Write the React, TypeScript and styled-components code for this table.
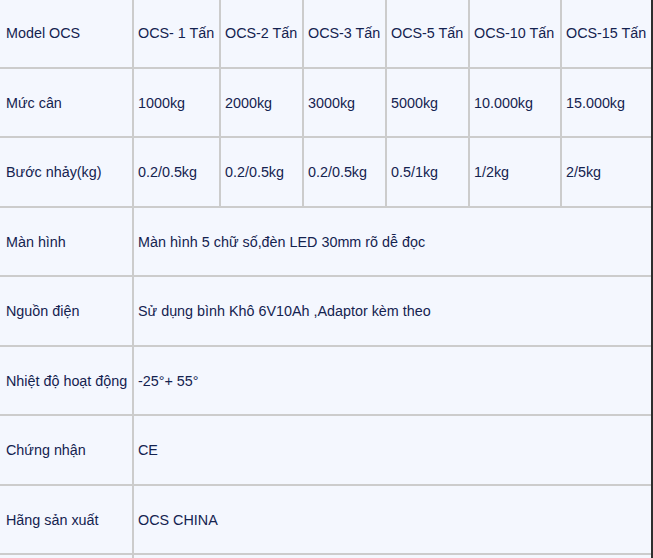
import React from "react";
import styled, { createGlobalStyle } from "styled-components";

const Global = createGlobalStyle`
  html, body { margin: 0; padding: 0; background: #f4f7fe; overflow: hidden; }
  body { width: 653px; height: 558px; }
`;

const Frame = styled.div`
  width: 651px;
  height: 558px;
  overflow: hidden;
  border-right: 2px solid #2e2e2e;
  background: #f4f7fe;
`;

const Table = styled.table`
  border-collapse: separate;
  border-spacing: 0;
  table-layout: fixed;
  width: 720px;
  margin-top: -1px;
  font-family: "Liberation Sans", Arial, sans-serif;
  font-size: 14.35px;
  color: #142350;
`;

const Row = styled.tr`
  height: 69.5px;
`;

const Cell = styled.td<{ $first?: boolean }>`
  box-sizing: border-box;
  border-right: 2px solid #cccccc;
  border-bottom: 2px solid #cccccc;
  padding: 1px 0 0 ${(p) => (p.$first ? "6px" : "4px")};
  vertical-align: middle;
  white-space: nowrap;
  overflow: hidden;
  background: #f4f7fe;
`;

const widths = [134, 87, 83, 83, 83, 92, 158];

const head = ["Model OCS", "OCS- 1 Tấn", "OCS-2 Tấn", "OCS-3 Tấn", "OCS-5 Tấn", "OCS-10 Tấn", "OCS-15 Tấn"];
const multi: string[][] = [
  ["Mức cân", "1000kg", "2000kg", "3000kg", "5000kg", "10.000kg", "15.000kg"],
  ["Bước nhảy(kg)", "0.2/0.5kg", "0.2/0.5kg", "0.2/0.5kg", "0.5/1kg", "1/2kg", "2/5kg"],
];
const spans: [string, string][] = [
  ["Màn hình", "Màn hình 5 chữ số,đèn LED 30mm rõ dễ đọc"],
  ["Nguồn điện", "Sử dụng bình Khô 6V10Ah ,Adaptor kèm theo"],
  ["Nhiệt độ hoạt động", "-25°+ 55°"],
  ["Chứng nhận", "CE"],
  ["Hãng sản xuất", "OCS CHINA"],
  ["", ""],
];

export default function App() {
  return (
    <>
      <Global />
      <Frame>
        <Table>
          <colgroup>
            {widths.map((w, i) => (
              <col key={i} style={{ width: w }} />
            ))}
          </colgroup>
          <tbody>
            <Row>
              {head.map((t, i) => (
                <Cell key={i} $first={i === 0}>{t}</Cell>
              ))}
            </Row>
            {multi.map((r, ri) => (
              <Row key={ri}>
                {r.map((t, i) => (
                  <Cell key={i} $first={i === 0}>{t}</Cell>
                ))}
              </Row>
            ))}
            {spans.map(([a, b], ri) => (
              <Row key={ri}>
                <Cell $first>{a}</Cell>
                <Cell colSpan={6}>{b}</Cell>
              </Row>
            ))}
          </tbody>
        </Table>
      </Frame>
    </>
  );
}
